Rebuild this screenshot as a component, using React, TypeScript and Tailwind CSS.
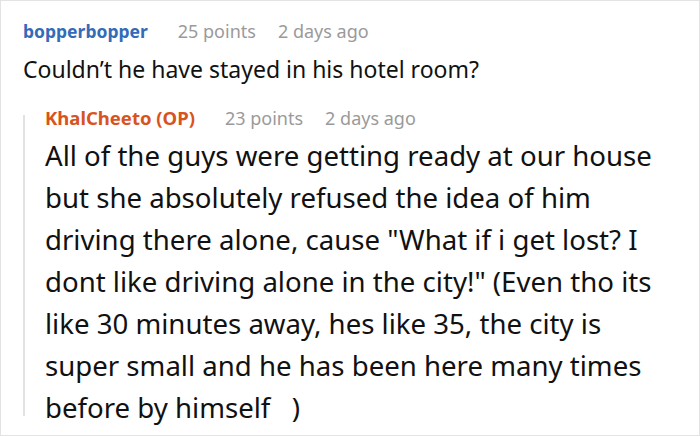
const body = [
  "All of the guys were getting ready at our house",
  "but she absolutely refused the idea of him",
  'driving there alone, cause "What if i get lost? I',
  'dont like driving alone in the city!" (Even tho its',
  "like 30 minutes away, hes like 35, the city is",
  "super small and he has been here many times",
  "before by himself \u00a0\u00a0)",
];

function Meta({
  name,
  points,
  nameClass,
  gap,
}: {
  name: string;
  points: number;
  nameClass: string;
  gap: string;
}) {
  return (
    <div className="flex items-center leading-6 whitespace-nowrap">
      <span className={`font-bold ${nameClass}`}>{name}</span>
      <span className={`${gap} text-[18px] text-[#9a9a9a]`}>{points} points</span>
      <span className="ml-[22px] text-[18px] text-[#9a9a9a]">2 days ago</span>
    </div>
  );
}

export default function App() {
  return (
    <div className="h-[436px] w-[700px] overflow-hidden border border-[#e3e3e3] bg-white pl-[22px] pt-[18px] font-['Noto_Sans','Open_Sans',sans-serif] text-[#111]">
      <Meta name="bopperbopper" points={25} nameClass="text-[17.5px] text-[#336bb8]" gap="ml-[30px]" />
      <p className="mt-[8px] text-[23px] leading-9">Couldn’t he have stayed in his hotel room?</p>

      <div className="mt-[19px] flex">
        <div className="mt-[9px] mb-[12px] w-[2px] shrink-0 bg-[#e2e2e2]" />
        <div className="pl-[20px]">
          <Meta name="KhalCheeto (OP)" points={23} nameClass="text-[18.5px] text-[#d9531e]" gap="ml-[30px]" />
          <div className="mt-[4px] text-[27.6px] leading-[42px]">
            {body.map((line) => (
              <p key={line} className="whitespace-nowrap">
                {line}
              </p>
            ))}
          </div>
        </div>
      </div>
    </div>
  );
}
